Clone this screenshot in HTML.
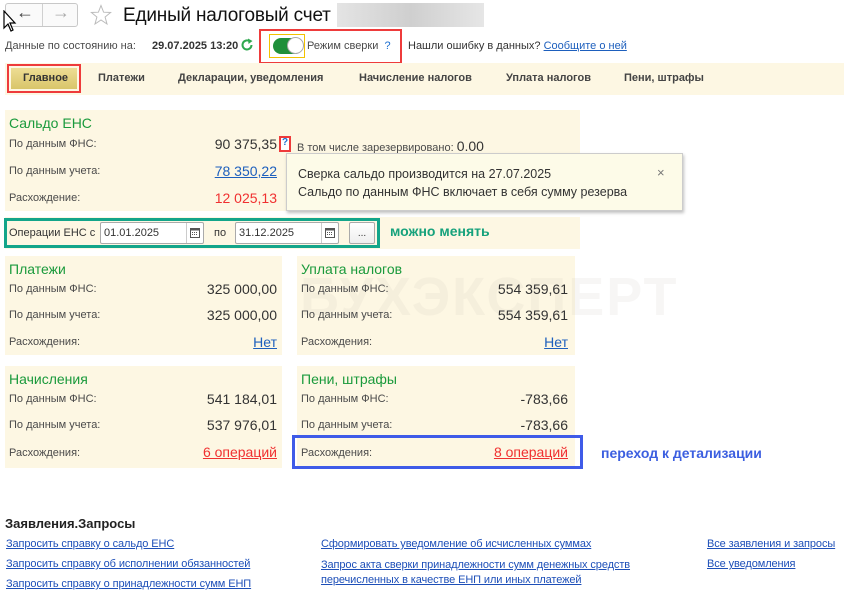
<!DOCTYPE html>
<html><head><meta charset="utf-8"><style>
*{margin:0;padding:0;box-sizing:border-box}
body{width:844px;height:595px;background:#fff;font-family:"Liberation Sans",Arial,sans-serif;position:relative;overflow:hidden;color:#333}
.a{position:absolute;white-space:nowrap}
.s{font-size:11px;color:#4a4a4a}
.p{position:absolute;background:#fdf7e3}
.g{color:#1a9a3c;font-size:14px}
.n{font-size:14px;color:#333;text-align:right}
.lnk{color:#1d5fbd;text-decoration:underline}
.bl{font-size:11px;color:#1d4fb8;text-decoration:underline;letter-spacing:-0.1px}
</style></head><body>
<!-- nav -->
<div class="a" style="left:5px;top:3px;width:73px;height:24px;border:1px solid #c8c8c8;border-radius:3px;background:#fafafa"></div>
<div class="a" style="left:42px;top:4px;width:1px;height:22px;background:#d0d0d0"></div>
<div class="a" style="left:16px;top:2px;font-size:18px;font-weight:bold;color:#444">&#8592;</div>
<div class="a" style="left:52px;top:2px;font-size:18px;font-weight:bold;color:#aaa">&#8594;</div>
<svg class="a" style="left:2px;top:10px" width="16" height="22"><path d="M2 1 L2 18 L6 14 L9 21 L11 20 L8 13 L13 13 Z" fill="#fff" stroke="#000" stroke-width="1.2"/></svg>
<svg class="a" style="left:90px;top:4px" width="22" height="22"><path d="M11 1.5 L13.6 8.2 L20.6 8.5 L15.1 13 L17 20 L11 16 L5 20 L6.9 13 L1.4 8.5 L8.4 8.2 Z" fill="none" stroke="#bbb" stroke-width="1"/></svg>
<div class="a" style="left:123px;top:5px;font-size:19px;color:#111;letter-spacing:-0.2px">Единый налоговый счет</div>
<div class="a" style="left:337px;top:3px;width:147px;height:24px;background:linear-gradient(90deg,#e4e4e4,#cfcfcf,#e6e6e6)"></div>
<!-- status row -->
<div class="a s" style="left:5px;top:40px">Данные по состоянию на:</div>
<div class="a" style="left:152px;top:40px;font-size:11px;font-weight:bold;color:#333">29.07.2025 13:20</div>
<svg class="a" style="left:240px;top:38px" width="14" height="14"><path d="M11.5 7 A4.5 4.5 0 1 1 9.5 3.2" fill="none" stroke="#2fa84f" stroke-width="2"/><path d="M8 0.5 L12.5 3 L8.5 6 Z" fill="#2fa84f"/></svg>
<div class="a" style="left:259px;top:29px;width:143px;height:35px;border:2px solid #ee3b3b"></div>
<div class="a" style="left:269px;top:34px;width:36px;height:24px;border:1px solid #f2c200"></div>
<div class="a" style="left:273px;top:38px;width:30px;height:16px;border-radius:8px;background:#1f8f3a"></div>
<div class="a" style="left:287px;top:37px;width:17px;height:17px;border-radius:50%;background:#fff;border:1px solid #aaa"></div>
<div class="a s" style="left:307px;top:40px">Режим сверки <span style="color:#1d6fd0">&nbsp;?</span></div>
<div class="a" style="left:408px;top:40px;font-size:11px;color:#333">Нашли ошибку в данных? <span class="lnk">Сообщите о ней</span></div>
<!-- tabs -->
<div class="p" style="left:5px;top:63px;width:839px;height:32px"></div>
<div class="a" style="left:7px;top:64px;width:74px;height:29px;border:2px solid #ee3b3b"></div>
<div class="a" style="left:11px;top:68px;width:66px;height:21px;background:linear-gradient(#eedd94,#d9c56a)"></div>
<div class="a" style="left:23px;top:72px;font-size:11px;font-weight:bold;color:#333">Главное</div>
<div class="a" style="left:98px;top:72px;font-size:11px;font-weight:bold;color:#444">Платежи</div>
<div class="a" style="left:178px;top:72px;font-size:11px;font-weight:bold;color:#444">Декларации, уведомления</div>
<div class="a" style="left:359px;top:72px;font-size:11px;font-weight:bold;color:#444">Начисление налогов</div>
<div class="a" style="left:506px;top:72px;font-size:11px;font-weight:bold;color:#444">Уплата налогов</div>
<div class="a" style="left:624px;top:72px;font-size:11px;font-weight:bold;color:#444">Пени, штрафы</div>
<!-- saldo -->
<div class="p" style="left:5px;top:110px;width:575px;height:101px"></div>
<div class="a g" style="left:9px;top:115px">Сальдо ЕНС</div>
<div class="a s" style="left:9px;top:138px">По данным ФНС:</div>
<div class="a n" style="left:180px;top:136px;width:97px">90 375,35</div>
<div class="a" style="left:279px;top:136px;width:12px;height:16px;border:2px solid #ee3b3b;background:#fff"></div>
<div class="a" style="left:282px;top:137px;font-size:10px;font-weight:bold;color:#1d6fd0">?</div>
<div class="a s" style="left:297px;top:138px">В том числе зарезервировано: <span style="font-size:14px;color:#333">0.00</span></div>
<div class="a s" style="left:9px;top:165px">По данным учета:</div>
<div class="a n lnk" style="left:180px;top:163px;width:97px;color:#1d5fbd">78 350,22</div>
<div class="a s" style="left:9px;top:192px">Расхождение:</div>
<div class="a n" style="left:180px;top:190px;width:97px;color:#f03030">12 025,13</div>
<div class="a" style="left:286px;top:153px;width:397px;height:58px;background:#fdfbe8;border:1px solid #ccc;box-shadow:1px 2px 3px rgba(0,0,0,.25)"></div>
<div class="a" style="left:298px;top:165px;font-size:12.5px;color:#333;line-height:18px">Сверка сальдо производится на 27.07.2025<br>Сальдо по данным ФНС включает в себя сумму резерва</div>
<div class="a" style="left:657px;top:165px;font-size:13px;color:#777">×</div>
<!-- filter -->
<div class="p" style="left:5px;top:217px;width:575px;height:32px"></div>
<div class="a" style="left:4px;top:218px;width:376px;height:30px;border:3px solid #13a58a"></div>
<div class="a s" style="left:9px;top:227px;color:#333">Операции ЕНС с</div>
<div class="a" style="left:100px;top:222px;width:104px;height:22px;border:1px solid #aaa;background:#fff;border-radius:2px"></div>
<div class="a" style="left:186px;top:223px;width:1px;height:20px;background:#ccc"></div>
<div class="a" style="left:104px;top:227px;font-size:11px;color:#333">01.01.2025</div>
<div class="a" style="left:214px;top:227px;font-size:11px;color:#333">по</div>
<div class="a" style="left:235px;top:222px;width:104px;height:22px;border:1px solid #aaa;background:#fff;border-radius:2px"></div>
<div class="a" style="left:321px;top:223px;width:1px;height:20px;background:#ccc"></div>
<div class="a" style="left:239px;top:227px;font-size:11px;color:#333">31.12.2025</div>
<svg class="a" style="left:190px;top:227px" width="10" height="11"><rect x="0.5" y="1.5" width="9" height="9" fill="none" stroke="#555"/><rect x="0.5" y="1.5" width="9" height="2" fill="#555"/><path d="M2 5.5h6M2 7.5h6" stroke="#555" stroke-dasharray="1 1"/></svg>
<svg class="a" style="left:325px;top:227px" width="10" height="11"><rect x="0.5" y="1.5" width="9" height="9" fill="none" stroke="#555"/><rect x="0.5" y="1.5" width="9" height="2" fill="#555"/><path d="M2 5.5h6M2 7.5h6" stroke="#555" stroke-dasharray="1 1"/></svg>
<div class="a" style="left:349px;top:222px;width:26px;height:22px;border:1px solid #aaa;background:linear-gradient(#fff,#eee);border-radius:2px;font-size:10px;text-align:center;line-height:22px;color:#333">...</div>
<div class="a" style="left:390px;top:223px;font-size:14px;font-weight:bold;color:#17a27c">можно менять</div>
<!-- panels -->
<div class="p" style="left:5px;top:256px;width:277px;height:99px"></div>
<div class="p" style="left:297px;top:256px;width:278px;height:99px"></div>
<div class="p" style="left:5px;top:366px;width:277px;height:102px"></div>
<div class="p" style="left:297px;top:366px;width:278px;height:102px"></div>
<!-- watermark over panels -->
<div class="a" style="left:300px;top:266px;font-size:54px;font-weight:bold;color:rgba(190,180,170,.12);letter-spacing:2px">БУХЭКСПЕРТ</div>

<div class="a g" style="left:9px;top:261px">Платежи</div>
<div class="a s" style="left:9px;top:283px">По данным ФНС:</div>
<div class="a n" style="left:150px;top:281px;width:127px">325 000,00</div>
<div class="a s" style="left:9px;top:309px">По данным учета:</div>
<div class="a n" style="left:150px;top:307px;width:127px">325 000,00</div>
<div class="a s" style="left:9px;top:336px">Расхождения:</div>
<div class="a n lnk" style="left:150px;top:334px;width:127px;color:#1d5fbd">Нет</div>

<div class="a g" style="left:301px;top:261px">Уплата налогов</div>
<div class="a s" style="left:301px;top:283px">По данным ФНС:</div>
<div class="a n" style="left:440px;top:281px;width:128px">554 359,61</div>
<div class="a s" style="left:301px;top:309px">По данным учета:</div>
<div class="a n" style="left:440px;top:307px;width:128px">554 359,61</div>
<div class="a s" style="left:301px;top:336px">Расхождения:</div>
<div class="a n lnk" style="left:440px;top:334px;width:128px;color:#1d5fbd">Нет</div>

<div class="a g" style="left:9px;top:371px">Начисления</div>
<div class="a s" style="left:9px;top:393px">По данным ФНС:</div>
<div class="a n" style="left:150px;top:391px;width:127px">541 184,01</div>
<div class="a s" style="left:9px;top:419px">По данным учета:</div>
<div class="a n" style="left:150px;top:417px;width:127px">537 976,01</div>
<div class="a s" style="left:9px;top:447px">Расхождения:</div>
<div class="a n" style="left:150px;top:444px;width:127px;color:#f03030;text-decoration:underline">6 операций</div>

<div class="a g" style="left:301px;top:371px">Пени, штрафы</div>
<div class="a s" style="left:301px;top:393px">По данным ФНС:</div>
<div class="a n" style="left:440px;top:391px;width:128px">-783,66</div>
<div class="a s" style="left:301px;top:419px">По данным учета:</div>
<div class="a n" style="left:440px;top:417px;width:128px">-783,66</div>
<div class="a" style="left:292px;top:435px;width:291px;height:34px;border:3px solid #3f5be8"></div>
<div class="a s" style="left:301px;top:447px">Расхождения:</div>
<div class="a n" style="left:440px;top:444px;width:128px;color:#f03030;text-decoration:underline">8 операций</div>
<div class="a" style="left:601px;top:445px;font-size:14px;font-weight:bold;color:#3c5fe0">переход к детализации</div>
<!-- bottom -->
<div class="a" style="left:5px;top:516px;font-size:13px;font-weight:bold;color:#222">Заявления.Запросы</div>
<div class="a bl" style="left:6px;top:538px">Запросить справку о сальдо ЕНС</div>
<div class="a bl" style="left:6px;top:558px">Запросить справку об исполнении обязанностей</div>
<div class="a bl" style="left:6px;top:578px">Запросить справку о принадлежности сумм ЕНП</div>
<div class="a bl" style="left:321px;top:538px">Сформировать уведомление об исчисленных суммах</div>
<div class="a bl" style="left:321px;top:558px;line-height:15px">Запрос акта сверки принадлежности сумм денежных средств<br>перечисленных в качестве ЕНП или иных платежей</div>
<div class="a bl" style="left:707px;top:538px">Все заявления и запросы</div>
<div class="a bl" style="left:707px;top:558px">Все уведомления</div>
</body></html>
